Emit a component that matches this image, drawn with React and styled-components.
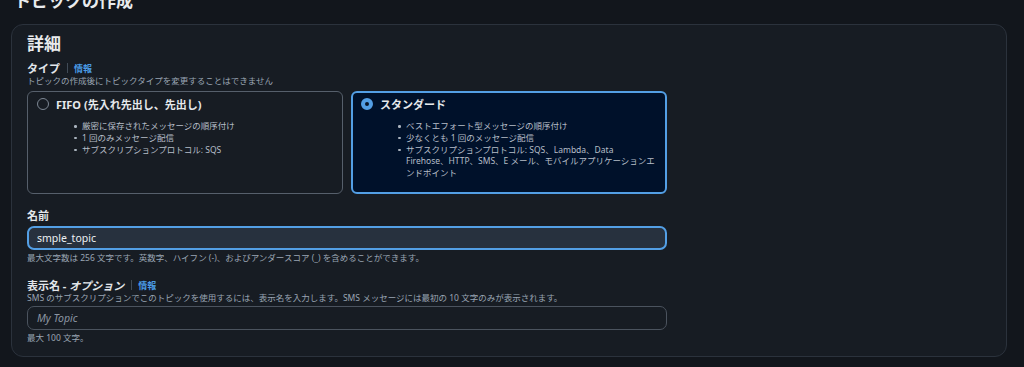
import React from 'react';
import styled, { createGlobalStyle } from 'styled-components';

const GlobalStyle = createGlobalStyle`
  html, body {
    margin: 0;
    padding: 0;
    background: #12161c;
    overflow: hidden;
  }
  body {
    font-family: "Noto Sans", "Noto Sans CJK JP", sans-serif;
    color: #d5dbe2;
  }
`;

const Page = styled.div`
  padding: 0 17px 0 11px;
  height: 367px;
  overflow: hidden;
`;

const PageTitle = styled.h1`
  margin: -9px 0 0 3px;
  font-size: 17px;
  line-height: 20px;
  font-weight: 700;
  color: #e9ebed;
`;

const Card = styled.section`
  margin-top: 13px;
  border: 1px solid #2b323c;
  border-radius: 12px;
  background: #171c23;
  padding: 8px 15px 10px;
  height: 333px;
  box-sizing: border-box;
`;

const Heading = styled.h2`
  margin: 0;
  font-size: 17px;
  line-height: 22px;
  font-weight: 700;
  color: #e9ebed;
`;

const Field = styled.div`
  width: 640px;
  margin-top: ${p => p.$top || 0}px;
`;

const LabelRow = styled.div`
  display: flex;
  align-items: center;
  height: 14px;
`;

const Label = styled.span`
  font-size: 11px;
  font-weight: 700;
  color: #e2e6ea;
`;

const Optional = styled.span`
  font-style: italic;
`;

const Divider = styled.span`
  width: 1px;
  height: 10px;
  background: #414b57;
  margin: 0 6px 0 7px;
`;

const InfoLink = styled.a`
  font-size: 9px;
  font-weight: 700;
  color: #4a9be6;
  text-decoration: none;
`;

const Hint = styled.div`
  font-size: 8.5px;
  line-height: 12px;
  color: #9aa5b3;
  margin-top: ${p => p.$top || 0}px;
  white-space: nowrap;
`;

const Tiles = styled.div`
  display: grid;
  grid-template-columns: 316px 316px;
  gap: 8px;
  margin-top: 4px;
`;

const Tile = styled.label`
  box-sizing: border-box;
  height: 103px;
  border-radius: 6px;
  padding: ${p => (p.$checked ? '4px 9px 0 8px' : '5px 10px 0 9px')};
  border: ${p => (p.$checked ? '2px solid #539fe5' : '1px solid #565f6b')};
  background: ${p => (p.$checked ? '#00112a' : '#171c23')};
`;

const TileHeader = styled.div`
  display: flex;
  align-items: center;
  gap: 7px;
  height: 14px;
  font-size: 11px;
  font-weight: 700;
  color: #e6e9ec;
`;

const Radio = styled.span`
  box-sizing: border-box;
  width: 12px;
  height: 12px;
  border-radius: 50%;
  border: ${p => (p.$checked ? '4px solid #539fe5' : '1px solid #7d8794')};
  background: ${p => (p.$checked ? '#0a1628' : 'transparent')};
`;

const Bullets = styled.ul`
  list-style: none;
  margin: 9px 0 0 37px;
  padding: 0;
`;

const Bullet = styled.li`
  position: relative;
  padding-left: 8px;
  font-size: 8.5px;
  line-height: 11.8px;
  color: #b6bec8;
  white-space: nowrap;

  &::before {
    content: '';
    position: absolute;
    left: 0;
    top: 5px;
    width: 2.5px;
    height: 2.5px;
    border-radius: 50%;
    background: #aab3be;
  }
`;

const Input = styled.input`
  display: block;
  box-sizing: border-box;
  width: 640px;
  height: 24px;
  margin-top: ${p => p.$top || 0}px;
  border-radius: 7px;
  font-family: inherit;
  font-size: 10.5px;
  outline: none;
  color: #eef1f4;
  border: ${p => (p.$focused ? '2px solid #539fe5' : '1px solid #4b535e')};
  background: ${p => (p.$focused ? '#27313e' : '#171c23')};
  padding: 0 8px 0 ${p => (p.$focused ? '8px' : '9px')};

  &::placeholder {
    color: #8b95a2;
    font-style: italic;
  }
`;

const TYPES = [
  {
    id: 'fifo',
    title: 'FIFO (先入れ先出し、先出し)',
    points: [
      '厳密に保存されたメッセージの順序付け',
      '1 回のみメッセージ配信',
      'サブスクリプションプロトコル: SQS',
    ],
  },
  {
    id: 'standard',
    title: 'スタンダード',
    points: [
      'ベストエフォート型メッセージの順序付け',
      '少なくとも 1 回のメッセージ配信',
      <>
        サブスクリプションプロトコル: SQS、Lambda、Data
        <br />
        Firehose、HTTP、SMS、E メール、モバイルアプリケーションエ
        <br />
        ンドポイント
      </>,
    ],
  },
];

const App = () => {
  const selected = 'standard';
  return (
    <Page>
      <GlobalStyle />
      <PageTitle>トピックの作成</PageTitle>
      <Card>
        <Heading>詳細</Heading>

        <Field $top={6}>
          <LabelRow>
            <Label>タイプ</Label>
            <Divider />
            <InfoLink href="#">情報</InfoLink>
          </LabelRow>
          <Hint>トピックの作成後にトピックタイプを変更することはできません</Hint>
          <Tiles>
            {TYPES.map(type => {
              const checked = type.id === selected;
              return (
                <Tile key={type.id} $checked={checked}>
                  <TileHeader>
                    <Radio $checked={checked} />
                    {type.title}
                  </TileHeader>
                  <Bullets>
                    {type.points.map((point, i) => (
                      <Bullet key={i}>{point}</Bullet>
                    ))}
                  </Bullets>
                </Tile>
              );
            })}
          </Tiles>
        </Field>

        <Field $top={14}>
          <LabelRow>
            <Label>名前</Label>
          </LabelRow>
          <Input $focused $top={4} defaultValue="smple_topic" />
          <Hint $top={2}>
            最大文字数は 256 文字です。英数字、ハイフン (-)、およびアンダースコア (_) を含めることができます。
          </Hint>
        </Field>

        <Field $top={14}>
          <LabelRow>
            <Label>
              表示名 - <Optional>オプション</Optional>
            </Label>
            <Divider />
            <InfoLink href="#">情報</InfoLink>
          </LabelRow>
          <Hint>
            SMS のサブスクリプションでこのトピックを使用するには、表示名を入力します。SMS メッセージには最初の 10 文字のみが表示されます。
          </Hint>
          <Input $top={2} placeholder="My Topic" />
          <Hint $top={2}>最大 100 文字。</Hint>
        </Field>
      </Card>
    </Page>
  );
};

export default App;
